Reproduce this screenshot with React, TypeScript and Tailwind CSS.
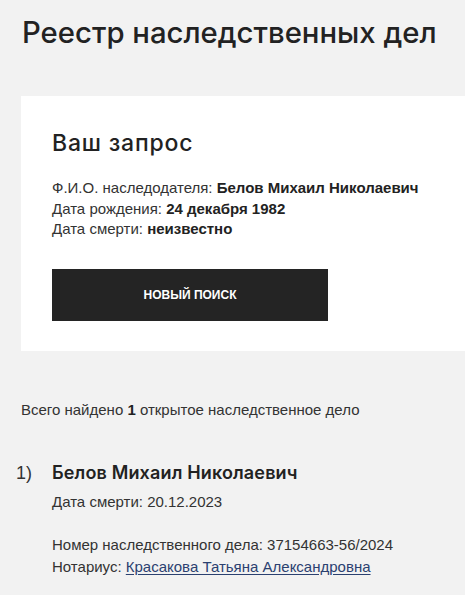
import React from "react";

function App() {
  return (
    <div className="min-h-[595px] w-[465px] overflow-hidden bg-[#f2f2f2] text-[#222] font-['Liberation_Sans',Arial,sans-serif]">
      <h1 className="pl-[22px] pt-[16px] font-['Inter',sans-serif] text-[29.3px] font-medium leading-[34px] text-[#222]">
        Реестр наследственных дел
      </h1>

      {/* Request card */}
      <div className="ml-[21px] mt-[46px] w-[460px] bg-white pl-[31px] pt-[34px] pb-[30px]">
        <h2 className="font-['Inter',sans-serif] text-[23px] font-medium leading-[26px] tracking-[0.8px]">Ваш запрос</h2>
        <div className="mt-[22px] text-[15px] leading-[20.5px] text-[#333]">
          <p>
            Ф.И.О. наследодателя: <b className="text-[#222]">Белов Михаил Николаевич</b>
          </p>
          <p>
            Дата рождения: <b className="text-[#222]">24 декабря 1982</b>
          </p>
          <p>
            Дата смерти: <b className="text-[#222]">неизвестно</b>
          </p>
        </div>
        <button className="mt-[29px] flex h-[52px] w-[276px] items-center justify-center bg-[#242424] text-[12px] font-bold uppercase text-white">
          Новый поиск
        </button>
      </div>

      <p className="pl-[21px] pt-[49px] text-[15px] leading-[19px] text-[#333]">
        Всего найдено <b className="text-[#222]">1</b> открытое наследственное дело
      </p>

      <div className="mt-[43px] flex">
        <span className="w-[52px] pl-[16px] text-[18px] leading-[22px] text-[#333]">1)</span>
        <div>
          <p className="font-['Inter',sans-serif] text-[18px] font-semibold leading-[22px] tracking-[0.15px] text-[#222]">
            Белов Михаил Николаевич
          </p>
          <p className="mt-[8px] text-[15px] leading-[20px] text-[#333]">Дата смерти: 20.12.2023</p>
          <p className="mt-[22px] text-[15px] leading-[22px] text-[#333]">
            Номер наследственного дела: 37154663-56/2024
          </p>
          <p className="text-[15px] leading-[22px] text-[#333]">
            Нотариус:{" "}
            <a href="#" className="text-[#2b4170] underline underline-offset-2">
              Красакова Татьяна Александровна
            </a>
          </p>
        </div>
      </div>
    </div>
  );
}

export default App;
